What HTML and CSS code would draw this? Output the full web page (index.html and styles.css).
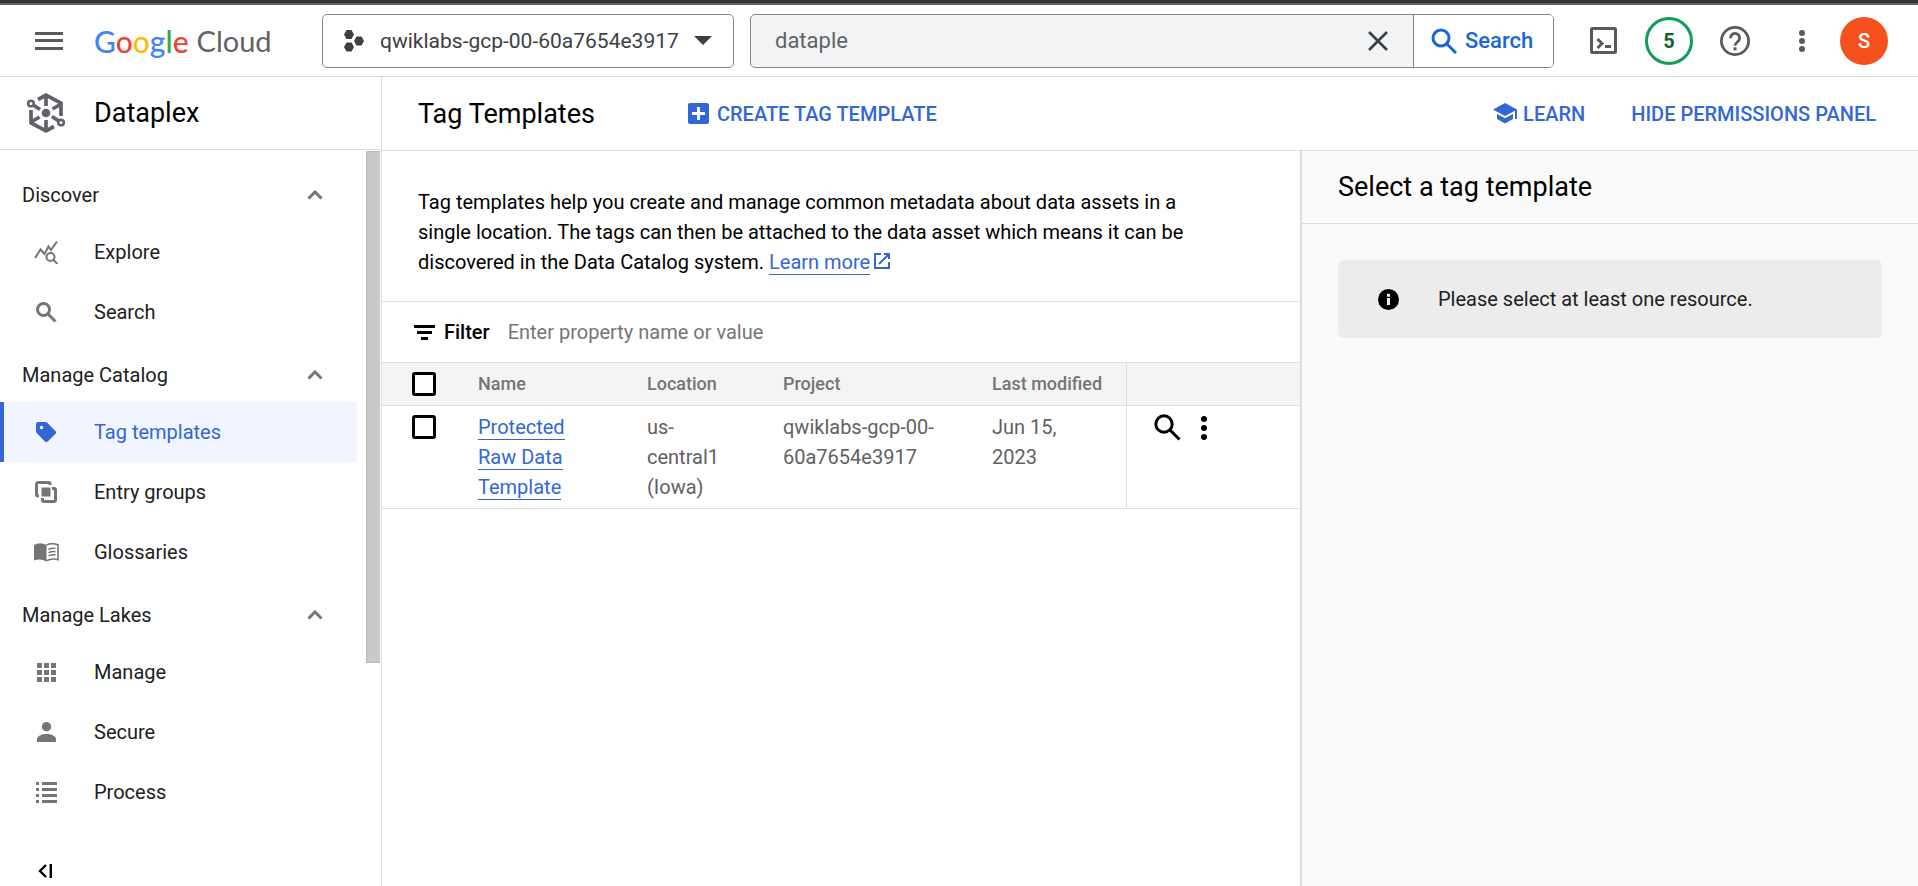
FILE: index.html
```html
<!DOCTYPE html>
<html lang="en">
<head>
<meta charset="utf-8">
<title>Tag Templates – Dataplex – Google Cloud</title>
<link rel="stylesheet" href="styles.css">
</head>
<body>
<header class="topbar">
  <button class="icon-btn menu-btn" aria-label="Main menu"><svg width="28" height="20" viewBox="0 0 28 20" fill="#5a5a5a"><path d="M0 1h28v3H0zM0 8h28v3H0zM0 16h28v3H0z"/></svg></button>
  <a class="logo" href="#" aria-label="Google Cloud"><span class="logo-name"><span class="g-blue">G</span><span class="g-red">o</span><span class="g-yellow">o</span><span class="g-blue">g</span><span class="g-green">l</span><span class="g-red">e</span></span><span class="logo-cloud">Cloud</span></a>
  <button class="project">
    <svg width="20" height="22" viewBox="0 0 20 22" fill="#3c4043"><path d="M2.500 0h5l2.500 4.500-2.500 4.500h-5L0 4.500zM2.500 12.500h5l2.500 4.500-2.500 4.500h-5L0 17zM12.500 6.500h5l2.500 4.500-2.500 4.500h-5L10 11z"/></svg>
    <span class="project-name">qwiklabs-gcp-00-60a7654e3917</span>
    <svg width="18" height="9" viewBox="0 0 18 9" fill="#3c4043"><path d="M0 0h18L9 9z"/></svg>
  </button>
  <form class="search">
    <input class="search-input" type="text" value="dataple" aria-label="Search resources">
    <button class="icon-btn clear-btn" type="button" aria-label="Clear"><svg width="20" height="20" viewBox="0 0 20 20" fill="none" stroke="#3c4043" stroke-width="2.600"><path d="M1 1l18 18M19 1L1 19"/></svg></button>
    <button class="search-btn" type="button"><svg width="26" height="26" viewBox="0 0 26 26" fill="none" stroke="#1967d2" stroke-width="3"><circle cx="10" cy="10" r="8"/><path d="M16 16l9 9"/></svg>Search</button>
  </form>
  <div class="tools">
    <button class="icon-btn tool-shell" aria-label="Cloud Shell"><svg width="27" height="27" viewBox="0 0 27 27" fill="none" stroke="#5a5a5a"><rect x="1.500" y="1.500" width="24" height="24" rx="1" stroke-width="3"/><path d="M7.500 12l4.500 4.500L7.500 21" stroke-width="3"/><path d="M15 19.500h6" stroke-width="3"/></svg></button>
    <button class="notif" aria-label="5 notifications">5</button>
    <button class="icon-btn tool-help" aria-label="Help"><svg width="30" height="30" viewBox="0 0 30 30"><circle cx="15" cy="15" r="13.600" fill="none" stroke="#5a5a5a" stroke-width="2.800"/><path d="M10.400 12.200a4.600 4.600 0 1 1 7.600 3.300c-1.700 1.500-3 2-3 4.300" fill="none" stroke="#5a5a5a" stroke-width="2.800"/><path d="M13.500 21.300h3v3h-3z" fill="#5a5a5a"/></svg></button>
    <button class="icon-btn tool-more" aria-label="More"><svg width="6" height="22" viewBox="0 0 6 22" fill="#5a5a5a"><circle cx="3" cy="3" r="3"/><circle cx="3" cy="11" r="3"/><circle cx="3" cy="19" r="3"/></svg></button>
    <button class="avatar" aria-label="Account">S</button>
  </div>
</header>
<div class="shell">
  <aside class="sidebar">
    <div class="product">
      <svg class="product-icon" width="38" height="40" viewBox="0 0 38 40" fill="none" stroke="#5f6368" stroke-width="3.700"><circle cx="19" cy="20" r="4.300" fill="#5f6368" stroke="none"/><path d="M11 6.500l8-4.300 15 8V23M27 33.500l-8 4.300-15-8V17M19 3v10M19 27v10M25.500 16l8.500-5M12.500 24L4 29M7 12.500l6 4M31 27.500l-6-4"/><circle cx="4" cy="10.500" r="2.800" stroke-width="2.600"/><circle cx="34" cy="29.500" r="2.800" stroke-width="2.600"/></svg>
      <span class="title">Dataplex</span>
    </div>
    <div class="nav-scroll">
      <nav class="nav">
        <button class="group">Discover<svg class="chev" width="16" height="10" viewBox="0 0 16 10"><path d="M1.500 8.500L8 2l6.500 6.500"/></svg></button>
        <a class="item" href="#"><span class="ico"><svg width="24" height="24" viewBox="0 0 24 24" fill="none" stroke="#757575" stroke-width="2"><path d="M1 18l5.500-8.500 4 4.500 4-7.500 2.500 3.500 6-8.500"/><circle cx="16.500" cy="17" r="4"/><path d="M19.500 20l4 4"/></svg></span>Explore</a>
        <a class="item" href="#"><span class="ico"><svg width="21" height="21" viewBox="0 0 21 21" fill="none" stroke="#757575" stroke-width="3"><circle cx="7.500" cy="7.500" r="6"/><path d="M12 12l7.500 7.500"/></svg></span>Search</a>
        <button class="group">Manage Catalog<svg class="chev" width="16" height="10" viewBox="0 0 16 10"><path d="M1.500 8.500L8 2l6.500 6.500"/></svg></button>
        <a class="item active" href="#"><span class="ico"><svg width="20" height="20" viewBox="0 0 20 20" fill="#3367d6"><path fill-rule="evenodd" d="M2 0h7.500l1.500.6 8.400 8.400a2 2 0 0 1 0 2.800l-7.600 7.600a2 2 0 0 1-2.800 0L.6 11 0 9.500V2a2 2 0 0 1 2-2zm3.500 3.700a1.800 1.800 0 1 0 0 3.600 1.800 1.800 0 0 0 0-3.600z"/></svg></span>Tag templates</a>
        <a class="item" href="#"><span class="ico"><svg width="22" height="22" viewBox="0 0 22 22" fill="none" stroke="#757575" stroke-width="3"><path d="M15 4V3a1.500 1.500 0 0 0-1.500-1.500H3A1.500 1.500 0 0 0 1.500 3v10.500A1.500 1.500 0 0 0 3 15h1M17 7.500h2A1.500 1.500 0 0 1 20.500 9v10a1.500 1.500 0 0 1-1.500 1.500H9A1.500 1.500 0 0 1 7.500 19v-2"/><path d="M6.500 6.500h9v9h-9z" fill="#757575" stroke="none"/></svg></span>Entry groups</a>
        <a class="item" href="#"><span class="ico"><svg width="25" height="19" viewBox="0 0 25 19"><path fill="#757575" d="M0 2Q6.500-1.500 12.500 2V18.500Q6.500 15 0 17.500z"/><path fill="none" stroke="#757575" stroke-width="1.600" d="M12.500 2Q18-.6 24 1.800V16.700Q18 15 12.500 17.700M14.500 6.500Q18 4.800 21.500 5.500M14.500 9.700Q18 8 21.500 8.700M14.500 12.900Q18 11.200 21.500 11.900"/></svg></span>Glossaries</a>
        <button class="group">Manage Lakes<svg class="chev" width="16" height="10" viewBox="0 0 16 10"><path d="M1.500 8.500L8 2l6.500 6.500"/></svg></button>
        <a class="item" href="#"><span class="ico"><svg width="19" height="19" viewBox="0 0 19 19" fill="#757575"><path d="M0 0h5v5H0zM7 0h5v5H7zM14 0h5v5h-5zM0 7h5v5H0zM7 7h5v5H7zM14 7h5v5h-5zM0 14h5v5H0zM7 14h5v5H7zM14 14h5v5h-5z"/></svg></span>Manage</a>
        <a class="item" href="#"><span class="ico"><svg width="19" height="20" viewBox="0 0 19 20" fill="#757575"><circle cx="9.500" cy="4.700" r="4.700"/><path d="M0 20v-3c0-3 5-5 9.500-5s9.500 2 9.500 5v3z"/></svg></span>Secure</a>
        <a class="item" href="#"><span class="ico"><svg width="21" height="21" viewBox="0 0 21 21" fill="#757575"><path d="M0 0h3v3H0zM6 0h15v3H6zM0 6h3v3H0zM6 6h15v3H6zM0 12h3v3H0zM6 12h15v3H6zM0 18h3v3H0zM6 18h15v3H6z"/></svg></span>Process</a>
      </nav>
      <div class="track"><div class="thumb"></div></div>
    </div>
    <div class="side-foot"><button class="icon-btn" aria-label="Collapse menu"><svg width="14" height="14" viewBox="0 0 14 14" fill="none" stroke="#000" stroke-width="2.400"><path d="M8 1L2 7l6 6M12.800 0v14"/></svg></button></div>
  </aside>
  <main class="main">
    <div class="page-head">
      <h1 class="title">Tag Templates</h1>
      <button class="action create"><svg width="21" height="21" viewBox="0 0 21 21"><rect width="21" height="21" rx="2" fill="#3367d6"/><path d="M10.500 4v13M4 10.500h13" stroke="#fff" stroke-width="3"/></svg>CREATE TAG TEMPLATE</button>
      <button class="action learn"><svg width="24" height="21" viewBox="0 0 24 21" fill="#3367d6"><path d="M12 0l12 6.500V16h-2V7.800L12 13 0 6.500zM4 11l8 4.300 8-4.300v5L12 20.500 4 16z"/></svg>LEARN</button>
      <button class="action">HIDE PERMISSIONS PANEL</button>
    </div>
    <div class="panes">
      <section class="content">
        <p class="intro">Tag templates help you create and manage common metadata about data assets in a single location. The tags can then be attached to the data asset which means it can be discovered in the Data Catalog system. <a class="link" href="#">Learn more</a><svg class="ext" width="16" height="16" viewBox="0 0 16 16" fill="none" stroke="#3367d6" stroke-width="2"><path d="M7 1H1v14h14V9M10 1h5v5M15 1L5 11"/></svg></p>
        <div class="filter">
          <svg width="21" height="15" viewBox="0 0 21 15" fill="#000"><path d="M0 0h21v3H0zM3 6h15v3H3zM7 12h7v3H7z"/></svg>
          <label for="filter">Filter</label>
          <input id="filter" class="filter-input" type="text" placeholder="Enter property name or value">
        </div>
        <table class="grid">
          <colgroup><col class="c-check"><col class="c-name"><col class="c-loc"><col class="c-proj"><col class="c-mod"><col></colgroup>
          <thead><tr><th><input class="check" type="checkbox" aria-label="Select all rows"></th><th>Name</th><th>Location</th><th>Project</th><th>Last modified</th><th class="acts"></th></tr></thead>
          <tbody><tr>
            <td><input class="check" type="checkbox" aria-label="Select Protected Raw Data Template"></td>
            <td><a class="link" href="#">Protected Raw Data Template</a></td>
            <td>us-central1 (Iowa)</td>
            <td>qwiklabs-gcp-00-60a7654e3917</td>
            <td>Jun 15, 2023</td>
            <td class="acts"><div class="row-acts"><button class="icon-btn" aria-label="Search entries"><svg width="27" height="27" viewBox="0 0 27 27" fill="none" stroke="#000" stroke-width="3"><circle cx="10" cy="10" r="8.200"/><path d="M16 16l9.500 9.500"/></svg></button><button class="icon-btn" aria-label="Row menu"><svg width="6" height="24" viewBox="0 0 6 24"><circle cx="3" cy="3" r="3"/><circle cx="3" cy="12" r="3"/><circle cx="3" cy="21" r="3"/></svg></button></div></td>
          </tr></tbody>
        </table>
      </section>
      <aside class="panel">
        <h2 class="title panel-title">Select a tag template</h2>
        <div class="notice"><svg width="21" height="21" viewBox="0 0 21 21"><circle cx="10.500" cy="10.500" r="10.500"/><path fill="#ececec" d="M9 9h3v7H9zM9 4.700h3v3H9z"/></svg>Please select at least one resource.</div>
      </aside>
    </div>
  </main>
</div>
</body>
</html>
```
FILE: styles.css
```css
*{box-sizing:border-box}
body{margin:0;height:100vh;display:flex;flex-direction:column;overflow:hidden;background:#fff;color:#000;font:20px/30px Roboto,"Liberation Sans",sans-serif}
button,input{font:inherit;color:inherit}
button{border:0;padding:0;background:none;cursor:pointer}
svg{display:block;flex:none}
a{color:inherit;text-decoration:none}

.topbar{display:flex;align-items:center;flex:none;height:77px;padding:6px 30px 4px 0;border-top:3px solid #35363a;border-bottom:1px solid #dadce0;box-shadow:inset 0 2px #5f6368}
.menu-btn{margin:0 31px 0 35px}
.logo{display:flex;gap:8px;width:228px;font:29px/40px Lato,sans-serif}
.logo-name{font-size:30px;font-weight:500}
.logo-cloud{color:#5f6368}
.g-blue{color:#4285f4}
.g-red{color:#ea4335}
.g-yellow{color:#fbbc04}
.g-green{color:#34a853}
.project{display:flex;align-items:center;flex:none;width:412px;height:54px;padding:0 21px;border:1px solid #80868b;border-radius:5px;color:#3c4043;font-size:21px}
.project-name{flex:1;padding-left:16px;text-align:left}
.search{display:flex;flex:0 1 804px;height:54px;margin-left:16px;border:1px solid #80868b;border-radius:5px;background:#f1f3f4;overflow:hidden;font-size:22px}
.search-input{flex:1;min-width:0;border:0;padding:0 24px;background:none;color:#5f6368;outline:0}
.clear-btn{padding:0 25px}
.search-btn{display:flex;align-items:center;gap:8px;width:140px;padding-left:17px;border-left:1px solid #80868b;background:#fff;color:#1967d2;font-weight:500}
.tools{display:flex;align-items:center;margin-left:auto}
.notif{width:48px;height:48px;margin:0 27px 0 28px;border:3px solid #0f9d58;border-radius:50%;color:#0d652d;font-size:20px;font-weight:700}
.tool-more{margin:0 35px 0 49px}
.avatar{width:48px;height:48px;border-radius:50%;background:#f4511e;color:#fff;font-weight:500}

.shell{display:flex;flex:1;min-height:0}
.sidebar{display:flex;flex-direction:column;flex:none;width:382px;border-right:1px solid #dadce0}
.product{display:flex;align-items:center;flex:none;height:73px;padding-left:27px;border-bottom:1px solid #dadce0}
.product-icon{margin-right:29px}
.title{margin:0;font-size:27px;line-height:36px;font-weight:400}
.nav-scroll{display:flex;flex:1;min-height:0}
.nav{flex:1;padding:12px 9px 0 0}
.group{display:flex;align-items:center;justify-content:space-between;width:100%;height:60px;padding:6px 34px 0 22px;color:#212121}
.chev{fill:none;stroke:#757575;stroke-width:3}
.item{display:flex;align-items:center;height:60px;color:#212121}
.ico{display:flex;justify-content:center;width:50px;margin:0 23px 0 21px}
.active{border-left:4px solid #3367d6;background:#f0f5ff;color:#3367d6}
.active .ico{margin-left:17px}
.track{width:15px;padding:1px 1px 0 0}
.thumb{height:512px;background:#c9c9c9;border:1px solid #b9b9b9;border-right:0}
.side-foot{flex:none;padding:0 38px}

.main{display:flex;flex-direction:column;flex:1;min-width:0}
.page-head{display:flex;align-items:center;flex:none;height:74px;padding:0 42px 0 36px;border-bottom:1px solid #e0e0e0}
.action{display:flex;align-items:center;gap:8px;color:#3367d6;font-weight:500}
.create{margin-left:93px}
.learn{margin:0 46px 0 auto;gap:6px}
.panes{display:flex;flex:1;min-height:0}
.content{flex:1;min-width:0}
.intro{margin:0;padding:36px 108px 24px 36px;border-bottom:1px solid #e0e0e0}
.link{color:#3367d6;border-bottom:1px solid #3367d6}
.ext{display:inline-block;margin-left:4px}
.filter{display:flex;align-items:center;height:60px;padding:0 32px;gap:9px;font-weight:500}
.filter-input{flex:1;margin-left:9px;border:0;padding:0;outline:0;background:none;font-weight:400}
.filter-input::placeholder{color:#757575;opacity:1}
.grid{width:100%;border-collapse:collapse;table-layout:fixed}
.c-check{width:84px}
.c-name{width:169px}
.c-loc{width:136px}
.c-proj{width:209px}
.c-mod{width:146px}
.grid th,.grid td{padding:6px 0 6px 12px;text-align:left;vertical-align:top;border:solid #e0e0e0;border-width:1px 0}
.grid th{background:#f4f4f4;color:#757575;font-size:18px;font-weight:500}
.grid td{color:#616161;padding-right:34px}
.grid td:first-child,.grid th:first-child{padding-left:30px;padding-right:0}
.grid .acts{border-left:1px solid #dadce0;padding-left:27px}
.check{appearance:none;display:block;width:24px;height:24px;margin:3px 0 0;border:3px solid #000;border-radius:3px;background:#fff}
.row-acts{display:flex;align-items:center;gap:20px;padding-top:2px}
.panel{flex:0 0 618px;border-left:2px solid #dadce0;background:#fafafa}
.panel-title{padding:18px 36px;border-bottom:1px solid #dadce0}
.notice{display:flex;align-items:center;gap:39px;height:78px;margin:36px;padding:0 40px;border-radius:6px;background:#ececec;color:#212121}
```
